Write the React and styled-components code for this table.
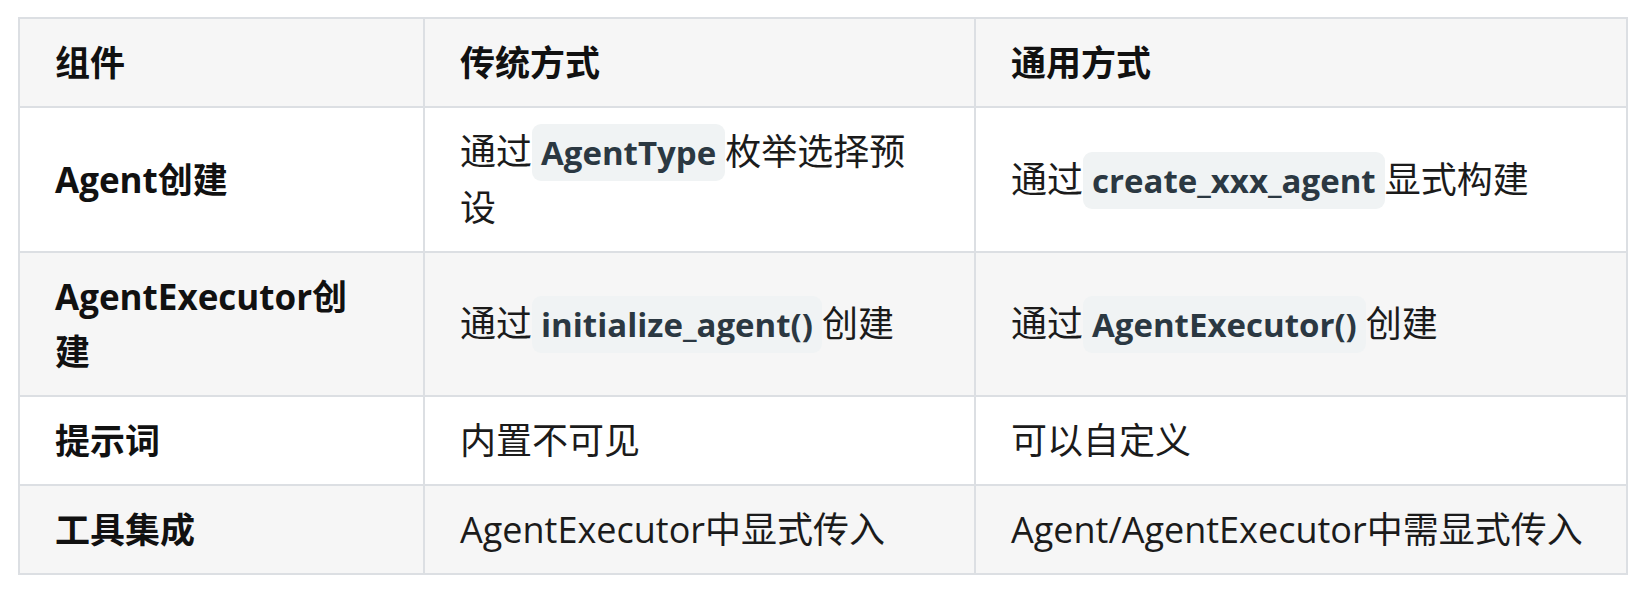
import React from "react";
import styled, { createGlobalStyle } from "styled-components";

const Global = createGlobalStyle`
  html, body { margin: 0; padding: 0; background: #ffffff; }
  body {
    font-family: "Open Sans", "Noto Sans CJK SC", sans-serif;
    color: #1b1b1b;
  }
`;

const Page = styled.div`
  padding: 17px 0 0 18px;
`;

const Table = styled.table`
  border-spacing: 0;
  border-top: 2px solid #dcdfe3;
  border-left: 2px solid #dcdfe3;
  table-layout: fixed;
  width: 1610px;
  font-size: 36px;
  line-height: 55px;
`;

const Col = styled.col`
  width: ${(p) => p.$w}px;
`;

const Row = styled.tr`
  background: ${(p) => (p.$shade ? "#f6f6f6" : "#ffffff")};
`;

const Head = styled.th`
  text-align: left;
  font-weight: 700;
  font-size: 35px;
  padding: 16px 35px;
  border-right: 2px solid #dcdfe3;
  border-bottom: 2px solid #dcdfe3;
  vertical-align: middle;
  color: #111;
`;

const Cell = styled.td`
  padding: 16px ${(p) => p.$pr}px 16px 35px;
  border-right: 2px solid #dcdfe3;
  border-bottom: 2px solid #dcdfe3;
  vertical-align: middle;
  font-weight: ${(p) => (p.$bold ? 700 : 400)};
  font-size: ${(p) => (p.$bold ? 35 : 36)}px;
  color: ${(p) => (p.$bold ? "#111" : "#1b1b1b")};
`;

const Code = styled.code`
  font-family: "Open Sans", "Noto Sans CJK SC", sans-serif;
  font-weight: 700;
  font-size: 33px;
  color: #2b3842;
  background: #f0f3f4;
  border-radius: 9px;
  padding: 6px 9px;
`;

const rows = [
  {
    name: "Agent创建",
    old: (
      <>
        通过<Code>AgentType</Code>枚举选择预设
      </>
    ),
    neo: (
      <>
        通过<Code>create_xxx_agent</Code>显式构建
      </>
    ),
  },
  {
    name: "AgentExecutor创建",
    old: (
      <>
        通过<Code>initialize_agent()</Code>创建
      </>
    ),
    neo: (
      <>
        通过<Code>AgentExecutor()</Code>创建
      </>
    ),
  },
  { name: "提示词", old: "内置不可见", neo: "可以自定义" },
  {
    name: "工具集成",
    old: "AgentExecutor中显式传入",
    neo: "Agent/AgentExecutor中需显式传入",
  },
];

export default function App() {
  return (
    <Page>
      <Global />
      <Table>
        <colgroup>
          <Col $w={405} />
          <Col $w={551} />
          <Col $w={652} />
        </colgroup>
        <thead>
          <Row $shade>
            <Head>组件</Head>
            <Head>传统方式</Head>
            <Head>通用方式</Head>
          </Row>
        </thead>
        <tbody>
          {rows.map((r, i) => (
            <Row key={r.name} $shade={i % 2 === 1}>
              <Cell $bold $pr={58}>{r.name}</Cell>
              <Cell $pr={58}>{r.old}</Cell>
              <Cell $pr={20}>{r.neo}</Cell>
            </Row>
          ))}
        </tbody>
      </Table>
    </Page>
  );
}
